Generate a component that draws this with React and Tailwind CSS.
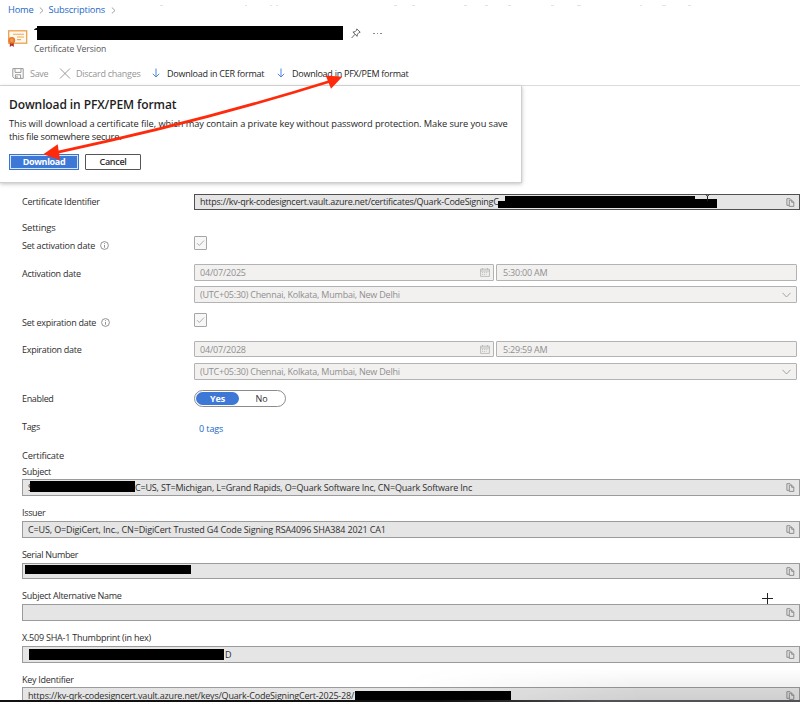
import React from 'react';

function CopyIcon() {
  return (
    <svg className="mr-[4px] h-[9px] w-[9px] shrink-0" viewBox="0 0 9 9" fill="none" stroke="#858585" strokeWidth="0.9">
      <path d="M3 7.3H.9V.7h3.2l1 1" />
      <path d="M3.3 8.4V2.2h2.5l2 2v4.2z" />
      <path d="M5.7 2.3v2h2" />
    </svg>
  );
}

function InfoIcon() {
  return (
    <svg className="h-[9px] w-[9px]" viewBox="0 0 9 9" fill="none" stroke="#777" strokeWidth="0.8">
      <circle cx="4.5" cy="4.5" r="3.9" />
      <path d="M4.5 4v2.7M4.5 2.2v.9" />
    </svg>
  );
}

function CalendarIcon() {
  return (
    <svg className="mr-[3px] h-[9px] w-[10px]" viewBox="0 0 10 9" fill="none" stroke="#b0b0b0" strokeWidth="0.8">
      <path d="M.6 1.2h8.8v7.2H.6zM.6 3h8.8M2.5 0v1.5M7.5 0v1.5" />
      <path d="M2 4.6h6M2 6.4h4.5" strokeDasharray="1 .9" />
    </svg>
  );
}

function DownArrow() {
  return (
    <svg className="h-[10px] w-[8px]" viewBox="0 0 8 10" fill="none" stroke="#4a86dc" strokeWidth="1">
      <path d="M4 .5v8.4M.8 5.8 4 9l3.2-3.2" />
    </svg>
  );
}

function Chevron() {
  return (
    <svg className="h-[7px] w-[5px]" viewBox="0 0 5 7" fill="none" stroke="#8a8a8a" strokeWidth="0.8">
      <path d="M.8.5 4 3.5.8 6.5" />
    </svg>
  );
}

function CheckBox() {
  return (
    <div className="flex h-[14px] w-[13px] items-center justify-center rounded-[1px] border border-[#a6a6a6] bg-[#f7f7f7]">
      <svg className="h-[8px] w-[9px]" viewBox="0 0 9 8" fill="none" stroke="#a3a3a3" strokeWidth="0.9">
        <path d="M1 4.2 3.3 6.5 8 1.6" />
      </svg>
    </div>
  );
}

function ReadOnly({ className, children }) {
  return (
    <div className={`flex items-center border bg-[#e5e5e5] pl-[5px] ${className}`}>
      <div className="flex h-full flex-1 items-center whitespace-nowrap">{children}</div>
      <CopyIcon />
    </div>
  );
}

function DateFields({ date, time, rowClass, zoneClass }) {
  return (
    <div className="w-[603px] text-[#8f8f8f]">
      <div className={`flex gap-[2px] ${rowClass}`}>
        <div className="flex w-[300px] items-center justify-between rounded-[1px] border border-[#b3b3b3] bg-[#f2f1f0] pl-[5px]">
          <span className="tracking-[-0.2px]">{date}</span>
          <CalendarIcon />
        </div>
        <div className="flex w-[301px] items-center rounded-[1px] border border-[#b3b3b3] bg-[#f2f1f0] pl-[6px]">
          <span className="tracking-[-0.22px]">{time}</span>
        </div>
      </div>
      <div className={`flex h-[17px] items-center justify-between rounded-[1px] border border-[#b3b3b3] bg-[#f2f1f0] pl-[5px] pr-[5px] ${zoneClass}`}>
        <span className="tracking-[-0.22px]">(UTC+05:30) Chennai, Kolkata, Mumbai, New Delhi</span>
        <svg className="h-[6px] w-[9px]" viewBox="0 0 9 6" fill="none" stroke="#9a9a9a" strokeWidth="0.9">
          <path d="M.5.8 4.5 5l4-4.2" />
        </svg>
      </div>
    </div>
  );
}

function Header() {
  return (
    <header className="h-[86px] border-b border-[#dcdcdc]">
      <nav className="flex h-[20px] items-center pl-[8px] text-[9.3px] text-[#2268c8]">
        <span className="mr-[6px] tracking-[-0.2px]">Home</span>
        <Chevron />
        <span className="ml-[4px] mr-[6px] tracking-[-0.15px]">Subscriptions</span>
        <Chevron />
      </nav>
      <div className="flex h-[37px] pl-[8px]">
        <svg className="mt-[10px] h-[18px] w-[20px]" viewBox="0 0 20 18">
          <rect x=".7" y=".8" width="18" height="12.4" fill="#fff8ee" stroke="#eda04e" strokeWidth="1.3" />
          <path d="M5 4.3h11M9 7h7M9 9.6h4" stroke="#efa75c" strokeWidth="1.1" />
          <path d="M1.8 11h4v6l-2-1.4-2 1.4z" fill="#b92a30" />
          <circle cx="3.8" cy="10.3" r="3.4" fill="#e77b2c" />
          <circle cx="3.8" cy="10.3" r="1.7" fill="#f2994d" />
        </svg>
        <div className="ml-[6px] w-[309px] pt-[6px]">
          <div className="flex h-[14px]">
            <svg className="h-[6px] w-[3px]" viewBox="0 0 3 6"><path d="M0 3.5 2 2h1v2H0z" fill="#111" /></svg>
            <div className="h-[14px] w-[306px] bg-black" />
          </div>
          <div className="pt-[3px] text-[8.6px] leading-[12px] tracking-[-0.05px] text-[#555]">Certificate Version</div>
        </div>
        <svg className="ml-[8px] mt-[8px] h-[11px] w-[10px]" viewBox="0 0 10 11" fill="none" stroke="#555" strokeWidth="0.9">
          <path d="M5.8.9 9.2 4.2 7.9 4.6 6.4 6.2 6.2 8.3 1.9 4.1 4 3.8 5.5 2.2zM4 6.3.6 10" />
        </svg>
        <div className="ml-[12px] mt-[13px] flex gap-[2px]">
          <i className="h-px w-[1.5px] bg-[#888]" />
          <i className="h-px w-[1.5px] bg-[#888]" />
          <i className="h-px w-[1.5px] bg-[#888]" />
        </div>
      </div>
      <div className="mt-[6px] flex h-[20px] items-center pl-[12px] text-[9px]">
        <svg className="h-[11px] w-[12px]" viewBox="0 0 12 11" fill="none" stroke="#999" strokeWidth="1">
          <path d="M.8.6h10.4v9.8H2.4L.8 8.9zM3 .8v3.6h6V.8M3.4 10.3V6.8h5.2v3.5M5 8v2" />
        </svg>
        <span className="ml-[6px] w-[29px] tracking-[-0.3px] text-[#969696]">Save</span>
        <svg className="h-[11px] w-[12px]" viewBox="0 0 11 11" fill="none" stroke="#8f8f8f" strokeWidth="0.9">
          <path d="m.5.5 10 10M10.500.5l-10 10" />
        </svg>
        <span className="ml-[5px] w-[76px] whitespace-nowrap tracking-[-0.27px] text-[#969696]">Discard changes</span>
        <DownArrow />
        <span className="ml-[7px] w-[110px] whitespace-nowrap tracking-[-0.23px] text-[#262626]">Download in CER format</span>
        <DownArrow />
        <span className="ml-[7px] whitespace-nowrap tracking-[-0.26px] text-[#262626]">Download in PFX/PEM format</span>
      </div>
    </header>
  );
}

function Dialog() {
  return (
    <div className="absolute left-0 top-[86px] h-[97px] w-[522px] border-b border-r border-[#cfcfcf] bg-white pl-[9px] pt-[10px] shadow-[0_1px_4px_rgba(0,0,0,0.25)]">
      <h2 className="text-[12px] font-semibold leading-[18px] tracking-[-0.1px] text-[#1d1d1d]">Download in PFX/PEM format</h2>
      <p className="mt-[3px] whitespace-nowrap text-[9.3px] leading-[13px] text-[#262626]">
        <span className="tracking-[-0.085px]">This will download a certificate file, which may contain a private key without password protection. Make sure you save</span>
        <br />
        <span className="tracking-[-0.22px]">this file somewhere secure.</span>
      </p>
      <div className="mt-[11px] flex gap-[6px] text-[9px] font-semibold">
        <button className="flex h-[16px] w-[70px] items-center justify-center border border-[#3974ca] bg-[#3d78d6] pb-px font-bold tracking-[-0.35px] text-white ring-1 ring-inset ring-[#d9e6fa]">
          Download
        </button>
        <button className="flex h-[16px] w-[56px] items-center justify-center rounded-[1px] border border-[#555] bg-white pb-px tracking-[-0.3px] text-[#2c2c2c]">
          Cancel
        </button>
      </div>
    </div>
  );
}

function Annotations() {
  return (
    <svg className="pointer-events-none absolute left-0 top-0 h-[702px] w-[800px]" viewBox="0 0 800 702">
      <path d="M57 152.300Q200 122 331 81" fill="none" stroke="#ff2a0c" strokeWidth="2.8" />
      <path d="M43.300 154.300 57.700 144.300 60 160z" fill="#ff2a0c" />
      <path d="M342.300 76.700 325.700 75.500 331 88.700z" fill="#ff2a0c" />
      <path d="M762 598.500h11M767.500 593v11" stroke="#222" strokeWidth="1" />
      <path d="M705.500 194.500l2 1.500 2-1.500M707.500 196v5" fill="none" stroke="#222" strokeWidth="1" />
      <path d="M160 5.500h3M245 5.500h2M270 5.500h2M276 5.500h2M394 5.500h3M412 5.500h3M464 5.500h3M485 5.500h3M508 5.500h3M551 5.500h3M577 5.500h4M640 5.500h2M662 5.500h4M688 5.500h3" stroke="#e2e2e2" strokeWidth="1" />
    </svg>
  );
}

export default function App() {
  return (
    <div className="relative h-[702px] w-[800px] overflow-hidden bg-white text-[9px] leading-none text-[#2e2e2e] [font-family:'Open_Sans','Noto_Sans',sans-serif]">
      <Header />
      <main className="pl-[22px] pt-[108px]">
        <div className="flex h-[16px]">
          <span className="w-[172px] pt-[3px] tracking-[-0.25px]">Certificate Identifier</span>
          <ReadOnly className="h-[16px] flex-1 border-[#505050]">
            <span className="w-[298px] pb-[2px] tracking-[-0.24px]">https://kv-qrk-codesigncert.vault.azure.net/certificates/Quark-CodeSigningC</span>
            <div className="flex">
              <div className="mt-[2px] h-[10px] w-[7px] bg-[linear-gradient(transparent_3px,#000_3px)]" />
              <div className="h-[12px] w-[190px] bg-black" />
              <div className="mt-[3px] h-[9px] w-[22px] bg-black" />
            </div>
          </ReadOnly>
        </div>
        <div className="mt-[9px] flex h-[16px] items-center pt-px text-[9.500px] tracking-[-0.2px]">Settings</div>
        <div className="mt-px flex h-[15px]">
          <div className="flex w-[172px] items-center gap-[5px] pt-[4px]">
            <span className="tracking-[-0.23px]">Set activation date</span>
            <InfoIcon />
          </div>
          <CheckBox />
        </div>
        <div className="mt-[13px] flex">
          <span className="w-[172px] pt-[5px] tracking-[-0.25px]">Activation date</span>
          <DateFields date="04/07/2025" time="5:30:00 AM" rowClass="h-[17px]" zoneClass="mt-[5px]" />
        </div>
        <div className="mt-[10px] flex h-[15px]">
          <div className="flex w-[172px] items-center gap-[5px] pt-[4px]">
            <span className="tracking-[-0.27px]">Set expiration date</span>
            <InfoIcon />
          </div>
          <CheckBox />
        </div>
        <div className="mt-[13px] flex">
          <span className="w-[172px] pt-[4px] tracking-[-0.28px]">Expiration date</span>
          <DateFields date="04/07/2028" time="5:29:59 AM" rowClass="h-[16px]" zoneClass="mt-[6px]" />
        </div>
        <div className="mt-[10px] flex h-[17px] items-center">
          <span className="w-[172px] tracking-[-0.33px]">Enabled</span>
          <div className="flex h-[17px] w-[92px] items-center rounded-full border border-[#8c8c8c] bg-white p-[1px]">
            <div className="flex h-[13px] w-[43px] items-center justify-center rounded-full bg-[#3d78d6] font-bold tracking-[-0.2px] text-white">Yes</div>
            <div className="flex-1 text-center tracking-[-0.1px]">No</div>
          </div>
        </div>
        <div className="mt-[11px] flex h-[16px] items-center">
          <span className="w-[177px] tracking-[-0.3px]">Tags</span>
          <span className="pt-[4px] tracking-[-0.1px] text-[#2268c8]">0 tags</span>
        </div>
        <div className="mt-[13px] flex h-[16px] items-center pt-px text-[9.300px] tracking-[-0.2px]">Certificate</div>
        <div className="flex h-[16px] items-center tracking-[-0.25px]">Subject</div>
        <ReadOnly className="h-[17px] border-[#9b9b9b]">
          <span className="w-[5px]">S</span>
          <div className="z-10 mb-[3px] ml-[-3px] h-[11px] w-[105px] bg-black" />
          <span className="tracking-[-0.175px]">C=US, ST=Michigan, L=Grand Rapids, O=Quark Software Inc, CN=Quark Software Inc</span>
        </ReadOnly>
        <div className="mt-[8px] flex h-[17px] items-center tracking-[-0.33px]">Issuer</div>
        <ReadOnly className="h-[17px] border-[#9b9b9b]">
          <span className="pb-px tracking-[-0.135px]">C=US, O=DigiCert, Inc., CN=DigiCert Trusted G4 Code Signing RSA4096 SHA384 2021 CA1</span>
        </ReadOnly>
        <div className="mt-[8px] flex h-[17px] items-center tracking-[-0.33px]">Serial Number</div>
        <ReadOnly className="h-[16px] border-[#9b9b9b]">
          <div className="mb-[3px] ml-[-3px] h-[9px] w-[166px] bg-black" />
        </ReadOnly>
        <div className="mt-[9px] flex h-[16px] items-center pb-px tracking-[-0.27px]">Subject Alternative Name</div>
        <ReadOnly className="h-[17px] border-[#9b9b9b]" />
        <div className="mt-[8px] flex h-[17px] items-center tracking-[-0.23px]">X.509 SHA-1 Thumbprint (in hex)</div>
        <ReadOnly className="h-[17px] border-[#9b9b9b]">
          <div className="ml-px h-[11px] w-[195px] bg-black" />
          <span className="pb-px pl-px">D</span>
        </ReadOnly>
        <div className="mt-[8px] flex h-[16px] items-center tracking-[-0.28px]">Key Identifier</div>
        <ReadOnly className="h-[17px] border-[#9b9b9b]">
          <span className="w-[327px] tracking-[-0.195px]">https://kv-qrk-codesigncert.vault.azure.net/keys/Quark-CodeSigningCert-2025-28/</span>
          <div className="mt-[2px] h-[11px] w-[156px] bg-black" />
        </ReadOnly>
      </main>
      <Dialog />
      <div className="absolute bottom-0 right-0 h-[34px] w-[400px] bg-linear-to-b from-transparent to-black/10 [mask-image:linear-gradient(to_right,transparent,black_60%)]" />
      <div className="absolute bottom-0 left-0 h-[2px] w-full bg-linear-to-r from-[#111] from-55% to-[#505256] to-75%" />
      <Annotations />
    </div>
  );
}
